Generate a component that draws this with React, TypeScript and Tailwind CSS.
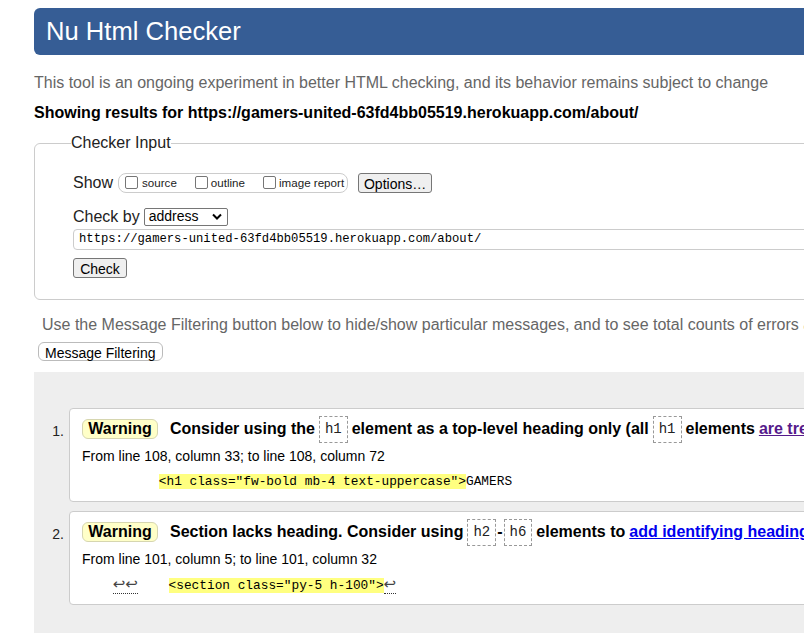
import React, { ReactNode } from 'react';

// --- small pieces ---

const Checkbox: React.FC = () => (
    <span className="inline-block w-[13px] h-[13px] border border-[#767676] rounded-[2px] bg-white" />
);

const CodeBox: React.FC<{ children: ReactNode }> = ({ children }) => (
    <code className="shrink-0 inline-flex items-center h-[27px] px-[5px] border border-dashed border-[#999] font-['Liberation_Mono',monospace] text-[14px] font-normal text-[#222]">
        {children}
    </code>
);

const WarningPill: React.FC = () => (
    <span className="shrink-0 inline-flex items-center justify-center h-[20px] w-[76px] bg-[#ffffc8] border border-[#d6d6b0] rounded-[6px] font-bold text-[16px] text-black">
        Warning
    </span>
);

const Marker: React.FC<{ children: ReactNode }> = ({ children }) => (
    <span className="border-b border-dotted border-[#333] text-[#444] font-['DejaVu_Sans',sans-serif] text-[15px] leading-[16px]">{children}</span>
);

const Mark: React.FC<{ children: ReactNode }> = ({ children }) => (
    <span className="bg-[#ffff80]">{children}</span>
);

const MessageCard: React.FC<{
    index: number;
    heading: ReactNode;
    location: string;
    extract: ReactNode;
}> = ({ index, heading, location, extract }) => (
    <li className="flex items-start">
        <span className="shrink-0 w-[35px] pt-[13px] pr-[5px] text-right text-[14px] text-[#222]">{index}.</span>
        <div className="flex-1 min-w-0 bg-white border border-[#cccccc] rounded-[4px] pl-[12px] pt-[6px] pb-[10px]">
            <div className="flex items-center h-[28px] gap-[4px] whitespace-nowrap font-bold text-[16px] text-black">
                <WarningPill />
                <span className="shrink-0 ml-[8px] flex items-center gap-[4px]">{heading}</span>
            </div>
            <p className="mt-[5px] text-[14px] leading-[16px] text-black whitespace-nowrap">{location}</p>
            <pre className="mt-[9px] h-[18px] leading-[18px] font-['Liberation_Mono',monospace] text-[12.8px] text-black whitespace-pre">
                {extract}
            </pre>
        </div>
    </li>
);

// --- main page ---

export default function App() {
    return (
        <div className="w-[804px] h-[633px] overflow-hidden bg-white font-['Liberation_Sans',Arial,sans-serif]">
            <div className="w-[1300px] pl-[34px] pt-[8px]">
                {/* Header */}
                <h1 className="h-[47px] flex items-center pl-[12px] bg-[#365d95] rounded-l-[6px] text-white text-[25.6px]">
                    Nu Html Checker
                </h1>

                <p className="mt-[19px] h-[18px] leading-[18px] text-[16px] text-[#666] whitespace-nowrap">
                    This tool is an ongoing experiment in better HTML checking, and its behavior remains subject to change
                </p>
                <p className="mt-[12px] h-[18px] leading-[18px] text-[16px] font-bold text-black whitespace-nowrap">
                    Showing results for https://gamers-united-63fd4bb05519.herokuapp.com/about/
                </p>

                {/* Checker input */}
                <fieldset className="mt-[12px] border border-[#cccccc] rounded-[6px] pl-[38px] pb-[21px]">
                    <legend className="-ml-[2px] h-[18px] leading-[18px] text-[16px] text-[#222]">Checker Input</legend>

                    <div className="mt-[21px] flex items-center h-[20px] text-[#222]">
                        <span className="text-[16px]">Show</span>
                        <div className="ml-[5px] flex items-center h-[20px] pl-[6px] pr-[3px] border border-[#cccccc] rounded-[8px] text-[11.6px]">
                            <label className="flex items-center gap-[4px]"><Checkbox />source</label>
                            <label className="ml-[18px] flex items-center gap-[3px]"><Checkbox />outline</label>
                            <label className="ml-[18px] flex items-center gap-[3px]"><Checkbox />image report</label>
                        </div>
                        <button className="ml-[10px] h-[20px] w-[74px] bg-[#efefef] border border-[#767676] rounded-[3px] text-[14px] text-black">
                            Options…
                        </button>
                    </div>

                    <div className="mt-[14px] flex items-center h-[19px]">
                        <span className="text-[16px] text-[#222]">Check by</span>
                        <div className="ml-[4px] flex items-center justify-between w-[84px] h-[18px] pl-[4px] pr-[5px] border border-[#767676] rounded-[2px] text-[14px] text-black">
                            address
                            <svg width="10" height="7" viewBox="0 0 10 7" fill="none" stroke="#000" strokeWidth="2">
                                <path d="M1 1.5l4 4 4-4" />
                            </svg>
                        </div>
                    </div>

                    <div className="mt-[3px] flex items-center h-[21px] pl-[5px] border border-[#cccccc] rounded-l-[4px] font-['Liberation_Mono',monospace] text-[12.2px] text-black">
                        https://gamers-united-63fd4bb05519.herokuapp.com/about/
                    </div>

                    <button className="mt-[8px] block h-[20px] w-[54px] bg-[#efefef] border border-[#767676] rounded-[3px] text-[14px] text-black">
                        Check
                    </button>
                </fieldset>

                <p className="mt-[16px] ml-[8px] h-[18px] leading-[18px] text-[16px] text-[#666] whitespace-nowrap">
                    Use the Message Filtering button below to hide/show particular messages, and to see total counts of errors and warnings.
                </p>
                <button className="mt-[8px] ml-[4px] block h-[19px] px-[6px] bg-white border border-[#bbbbbb] rounded-[6px] text-[14px] text-black">
                    Message Filtering
                </button>

                {/* Results */}
                <div className="mt-[11px] h-[400px] bg-[#eeeeee] pt-[36px]">
                    <ol className="flex flex-col gap-[9px]">
                        <MessageCard
                            index={1}
                            heading={
                                <>
                                    Consider using the <CodeBox>h1</CodeBox> element as a top-level heading only (all <CodeBox>h1</CodeBox> elements
                                    <a className="text-[#551a8b] underline">are treated as top-level headings by many screen readers and other tools</a>).
                                </>
                            }
                            location="From line 108, column 33; to line 108, column 72"
                            extract={<>{'          '}<Mark>{'<h1 class="fw-bold mb-4 text-uppercase">'}</Mark>GAMERS</>}
                        />
                        <MessageCard
                            index={2}
                            heading={
                                <>
                                    Section lacks heading. Consider using <CodeBox>h2</CodeBox>
                                    <span className="-mx-[3px]">-</span>
                                    <CodeBox>h6</CodeBox> elements to
                                    <a className="text-[#0000ee] underline">add identifying headings to all sections</a>.
                                </>
                            }
                            location="From line 101, column 5; to line 101, column 32"
                            extract={<>{'    '}<Marker>↩↩</Marker>{'    '}<Mark>{'<section class="py-5 h-100">'}</Mark><Marker>↩</Marker></>}
                        />
                    </ol>
                </div>
            </div>
        </div>
    );
}
